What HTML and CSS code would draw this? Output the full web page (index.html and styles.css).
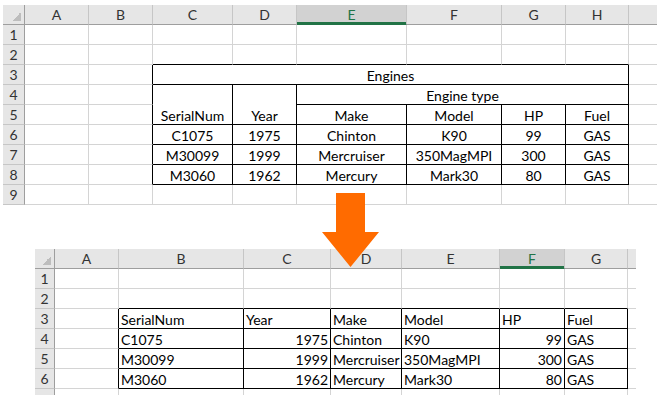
FILE: index.html
```html
<!DOCTYPE html>
<html lang="en">
<head>
    <meta charset="UTF-8">
    <title>Engines - unmerge table</title>
    <link rel="stylesheet" href="styles.css">
</head>
<body>
    <div class="page">
        <table class="sheet sheet-top">
            <colgroup>
                <col class="w22"><col class="w64"><col class="w64"><col class="w80"><col class="w64">
                <col class="w110"><col class="w95"><col class="w64"><col class="w63"><col class="w28">
            </colgroup>
            <tr class="head">
                <th class="corner"></th><th>A</th><th>B</th><th>C</th><th>D</th><th class="sel">E</th><th>F</th><th>G</th><th>H</th><th></th>
            </tr>
            <tr><th class="n">1</th><td></td><td></td><td></td><td></td><td></td><td></td><td></td><td></td><td></td></tr>
            <tr><th class="n">2</th><td></td><td></td><td class="b"></td><td class="b"></td><td class="b"></td><td class="b"></td><td class="b"></td><td class="b"></td><td></td></tr>
            <tr><th class="n">3</th><td></td><td class="r"></td><td class="x c" colspan="6">Engines</td><td></td></tr>
            <tr><th class="n">4</th><td></td><td class="r"></td><td class="x c" rowspan="2">SerialNum</td><td class="x c" rowspan="2">Year</td><td class="x c" colspan="4">Engine type</td><td></td></tr>
            <tr><th class="n">5</th><td></td><td class="r"></td><td class="x c">Make</td><td class="x c">Model</td><td class="x c">HP</td><td class="x c">Fuel</td><td></td></tr>
            <tr><th class="n">6</th><td></td><td class="r"></td><td class="x c">C1075</td><td class="x c">1975</td><td class="x c">Chinton</td><td class="x c">K90</td><td class="x c">99</td><td class="x c">GAS</td><td></td></tr>
            <tr><th class="n">7</th><td></td><td class="r"></td><td class="x c">M30099</td><td class="x c">1999</td><td class="x c">Mercruiser</td><td class="x c">350MagMPI</td><td class="x c">300</td><td class="x c">GAS</td><td></td></tr>
            <tr><th class="n">8</th><td></td><td class="r"></td><td class="x c">M3060</td><td class="x c">1962</td><td class="x c">Mercury</td><td class="x c">Mark30</td><td class="x c">80</td><td class="x c">GAS</td><td></td></tr>
            <tr><th class="n">9</th><td></td><td></td><td></td><td></td><td></td><td></td><td></td><td></td><td></td></tr>
        </table>

        <table class="sheet sheet-bottom">
            <colgroup>
                <col class="w20"><col class="w64"><col class="w125"><col class="w87"><col class="w71">
                <col class="w98"><col class="w65"><col class="w63"><col class="w8">
            </colgroup>
            <tr class="head">
                <th class="corner"></th><th>A</th><th>B</th><th>C</th><th>D</th><th>E</th><th class="sel">F</th><th>G</th><th></th>
            </tr>
            <tr><th class="n">1</th><td></td><td></td><td></td><td></td><td></td><td></td><td></td><td></td></tr>
            <tr><th class="n">2</th><td></td><td class="b"></td><td class="b"></td><td class="b"></td><td class="b"></td><td class="b"></td><td class="b"></td><td></td></tr>
            <tr><th class="n">3</th><td class="r"></td><td class="x">SerialNum</td><td class="x">Year</td><td class="x">Make</td><td class="x">Model</td><td class="x">HP</td><td class="x">Fuel</td><td></td></tr>
            <tr><th class="n">4</th><td class="r"></td><td class="x">C1075</td><td class="x num">1975</td><td class="x">Chinton</td><td class="x">K90</td><td class="x num">99</td><td class="x">GAS</td><td></td></tr>
            <tr><th class="n">5</th><td class="r"></td><td class="x">M30099</td><td class="x num">1999</td><td class="x">Mercruiser</td><td class="x">350MagMPI</td><td class="x num">300</td><td class="x">GAS</td><td></td></tr>
            <tr><th class="n">6</th><td class="r"></td><td class="x">M3060</td><td class="x num">1962</td><td class="x">Mercury</td><td class="x">Mark30</td><td class="x num">80</td><td class="x">GAS</td><td></td></tr>
            <tr><th class="n"></th><td></td><td></td><td></td><td></td><td></td><td></td><td></td><td></td></tr>
        </table>
    </div>

    <!-- arrow between the two sheets -->
    <svg class="arrow" viewBox="0 0 57 74" xmlns="http://www.w3.org/2000/svg">
        <polygon points="14,0 43,0 43,39 57,39 28.5,74 0,39 14,39"/>
    </svg>
</body>
</html>
```

FILE: styles.css
```css
html, body {
    margin: 0;
    overflow: hidden;
}
body {
    position: relative;
    width: 671px;
    height: 395px;
    background: #fff;
    font-family: Lato, "Liberation Sans", sans-serif;
    font-size: 14px;
    color: #000;
}
.page {
    padding: 5px 0 0 3px;
}
.sheet {
    border-collapse: separate;
    border-spacing: 0;
    table-layout: fixed;
}
.sheet-top {
    width: 654px;
}
.sheet-bottom {
    width: 601px;
    margin: 44px 0 0 32px;
}
.w8 { width: 8px; }
.w20 { width: 20px; }
.w22 { width: 22px; }
.w28 { width: 28px; }
.w63 { width: 63px; }
.w64 { width: 64px; }
.w65 { width: 65px; }
.w71 { width: 71px; }
.w80 { width: 80px; }
.w87 { width: 87px; }
.w95 { width: 95px; }
.w98 { width: 98px; }
.w110 { width: 110px; }
.w125 { width: 125px; }
.sheet tr {
    height: 20px;
}
.sheet td,
.sheet th {
    padding: 0 2px;
    line-height: 16px;
    white-space: nowrap;
    overflow: hidden;
    border-right: 1px solid #d4d4d4;
    border-bottom: 1px solid #d4d4d4;
    vertical-align: bottom;
    text-align: left;
}
.sheet th {
    background: #e6e6e6;
    font-weight: normal;
    color: #333;
    text-align: center;
    vertical-align: middle;
    padding: 0;
}
.head th {
    border-right-color: #c6c6c6;
    border-bottom-color: #9e9e9e;
}
.head th.sel {
    background: #d2d2d2;
    color: #217346;
    border-bottom-color: #217346;
    box-shadow: inset 0 -2px 0 #217346;
}
.sheet th.n {
    border-right-color: #9e9e9e;
    border-bottom-color: #c6c6c6;
}
.sheet th.corner {
    border-right-color: #9e9e9e;
    background: #e6e6e6 linear-gradient(135deg, transparent 50%, #bdbdbd 50%) no-repeat right 3px bottom 3px / 9px 9px;
}
.sheet tr > :last-child {
    border-right: none;
}
.r {
    border-right-color: #000 !important;
}
.b {
    border-bottom-color: #000 !important;
}
.x {
    border-right-color: #000 !important;
    border-bottom-color: #000 !important;
}
.c {
    text-align: center !important;
}
.num {
    text-align: right !important;
}
.arrow {
    position: absolute;
    left: 322px;
    top: 193px;
    width: 57px;
    height: 74px;
    fill: #ff6b00;
}
```
